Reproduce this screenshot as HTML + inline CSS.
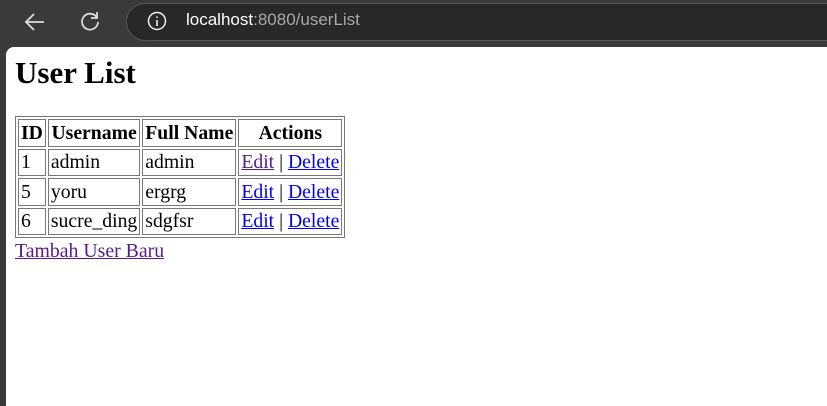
<!DOCTYPE html>
<html><head><style>
html,body{margin:0;padding:0;width:827px;height:406px;overflow:hidden;background:#3a3a3a;font-family:"Liberation Serif",serif;}
.bar{position:absolute;left:0;top:0;width:827px;height:47px;background:#3a3a3a;}
.url{position:absolute;left:126px;top:3px;width:760px;height:38px;border-radius:20px;background:#282828;border:1px solid #555;box-sizing:border-box;}
.urltext{position:absolute;left:186px;top:10px;font-family:"Liberation Sans",sans-serif;font-size:17px;color:#fff;}
.urltext span{color:#a8a8a8}
.page{position:absolute;left:6px;top:47px;width:830px;height:359px;background:#fff;border-top-left-radius:8px;}
h1{position:absolute;left:15px;top:54px;margin:0;font-size:31px;line-height:37px;font-weight:bold;}
table{position:absolute;left:15px;top:116px;border:1px solid #777;border-spacing:2px;font-size:19.7px;}
td,th{border:1px solid #777;padding:0 2px;height:25.5px;line-height:22px;white-space:nowrap;}
th{font-weight:bold}
a{color:#0000ee}
a.v{color:#551a8b}
.add{position:absolute;left:15px;top:239px;font-size:19.8px;line-height:24px;}
</style></head><body>
<div class="bar">
<svg style="position:absolute;left:24px;top:12px" width="22" height="20" viewBox="0 0 22 20"><path d="M20 10H3M10 2L2 10l8 8" stroke="#ddd" stroke-width="1.8" fill="none"/></svg>
<svg style="position:absolute;left:79px;top:10px" width="22" height="22" viewBox="0 0 22 22"><path d="M17.5 7A8 8 0 1 0 19 12" stroke="#ddd" stroke-width="1.8" fill="none"/><path d="M18 2v6h-6" stroke="#ddd" stroke-width="1.8" fill="none"/></svg>
<div class="url"></div>
<svg style="position:absolute;left:147px;top:11px" width="20" height="20" viewBox="0 0 20 20"><circle cx="10" cy="10" r="8.5" stroke="#eee" stroke-width="1.5" fill="none"/><path d="M10 9v6M10 5.5v1.5" stroke="#eee" stroke-width="1.6"/></svg>
<div class="urltext">localhost<span>:8080/userList</span></div>
</div>
<div class="page"></div>
<h1>User List</h1>
<table>
<tr><th>ID</th><th>Username</th><th>Full Name</th><th>Actions</th></tr>
<tr><td>1</td><td>admin</td><td>admin</td><td><a class="v" href="#">Edit</a> | <a href="#">Delete</a></td></tr>
<tr><td>5</td><td>yoru</td><td>ergrg</td><td><a href="#">Edit</a> | <a href="#">Delete</a></td></tr>
<tr><td>6</td><td>sucre_ding</td><td>sdgfsr</td><td><a href="#">Edit</a> | <a href="#">Delete</a></td></tr>
</table>
<div class="add"><a class="v" href="#">Tambah User Baru</a></div>
</body></html>
